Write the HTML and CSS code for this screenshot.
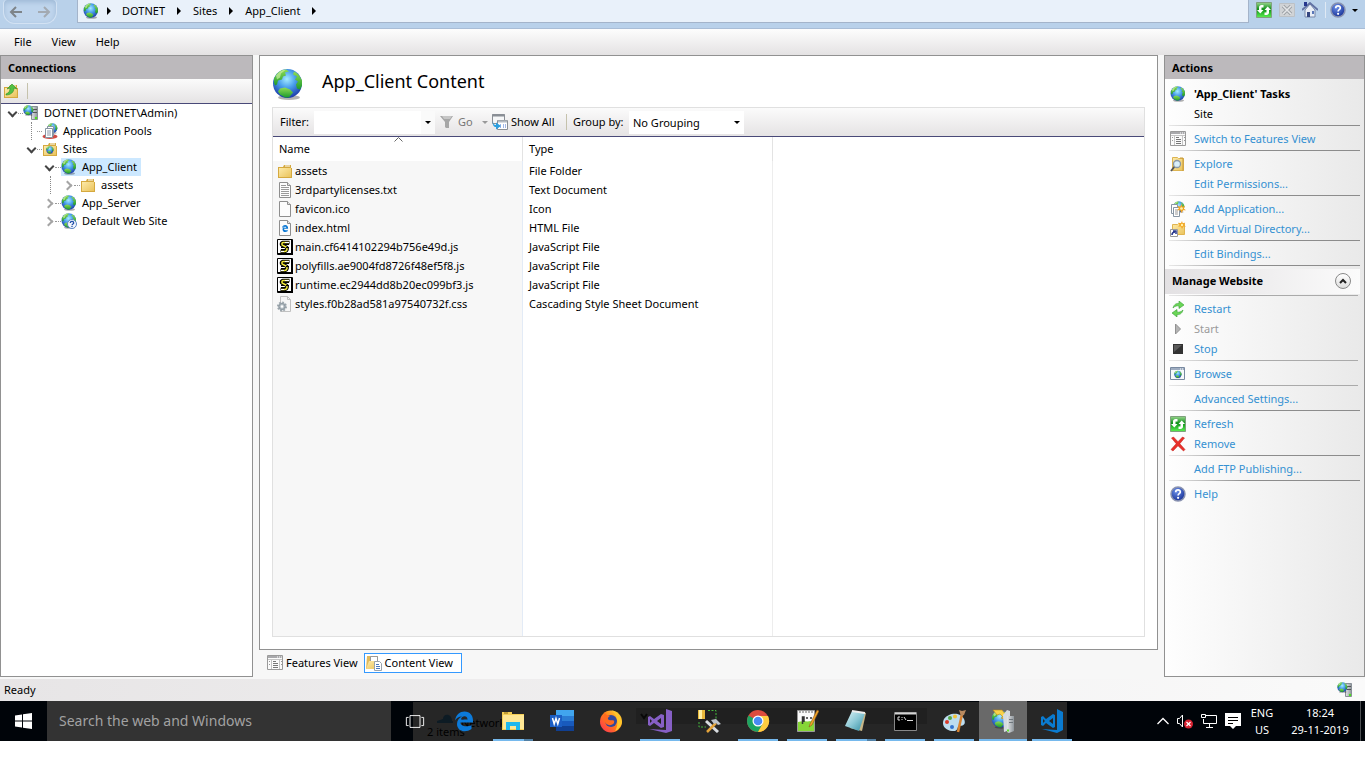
FILE: index.html
```html
<!DOCTYPE html>
<html lang="en">
<head>
<meta charset="utf-8">
<title>App_Client Content</title>
<link rel="stylesheet" href="styles.css">
</head>
<body>
<svg class="sprite" aria-hidden="true">
  <defs>
    <radialGradient id="sea" cx="48%" cy="35%" r="65%"><stop offset="0" stop-color="#a5ecff"/><stop offset=".45" stop-color="#4a9fec"/><stop offset="1" stop-color="#1a3aa8"/></radialGradient>
    <linearGradient id="land" x1="0" y1="0" x2="0" y2="1"><stop offset="0" stop-color="#8fdc55"/><stop offset="1" stop-color="#1c9a2c"/></linearGradient>
    <linearGradient id="paper" x1="0" y1="0" x2="1" y2="1"><stop offset="0" stop-color="#fdeaa8"/><stop offset="1" stop-color="#eac35c"/></linearGradient>
    <linearGradient id="grn" x1="0" y1="0" x2="0" y2="1"><stop offset="0" stop-color="#9ad68e"/><stop offset=".45" stop-color="#0d8f18"/><stop offset="1" stop-color="#5cf052"/></linearGradient>
    <linearGradient id="steel" x1="0" y1="0" x2="1" y2="0"><stop offset="0" stop-color="#e6e8ea"/><stop offset="1" stop-color="#8d949a"/></linearGradient>
    <linearGradient id="fox" x1="0" y1="1" x2="1" y2="0"><stop offset="0" stop-color="#ff2a5a"/><stop offset=".5" stop-color="#ff7a1a"/><stop offset="1" stop-color="#ffe83a"/></linearGradient>
    <linearGradient id="glass" x1="0" y1="0" x2="1" y2="1"><stop offset="0" stop-color="#e0f4f8"/><stop offset=".5" stop-color="#8cc9d6"/><stop offset="1" stop-color="#2f8ba0"/></linearGradient>
    <radialGradient id="blueball" cx="40%" cy="30%" r="70%"><stop offset="0" stop-color="#6d92ea"/><stop offset="1" stop-color="#1a3398"/></radialGradient>
  </defs>
  <symbol id="globe" viewBox="0 0 32 32">
    <ellipse cx="17" cy="29" rx="11" ry="2.500" fill="#000" opacity=".3"/>
    <circle cx="15.500" cy="15" r="14.500" fill="url(#sea)"/>
    <path d="M2 10C5 4 9 1 14 1l3 2-4 1 1 3-3 1-1 3-4 1-1 4-2 1-1-3z" fill="url(#land)"/>
    <path d="M22 3c3 1 6 4 8 9v5l-2 4-3-1-1-4 2-3-3-2 2-3-4-2z" fill="url(#land)"/>
    <path d="M8 20l5-1 5 2 3 3-4 5h-4l-5-3-2-3z" fill="url(#land)"/>
    <path d="M4 7C7 3 11 1 14 1l-5 4-1 4-3 2z" fill="#d8f5b0" opacity=".6"/>
  </symbol>
  <symbol id="folder" viewBox="0 0 16 16">
    <path d="M1 4h5l1-2h7v3h1v10H1z" fill="#d5a93f"/><path d="M8 3h5" stroke="#fff"/><path d="M2 5h12v9H2z" fill="url(#paper)"/>
  </symbol>
  <symbol id="folderup" viewBox="0 0 16 16">
    <use href="#folder"/><path d="M3 11c3-1 4-3 4-6L4 6l5-5 5 5-3-1c0 4-3 7-8 7z" fill="#52c044" stroke="#2b9125" stroke-width=".6"/>
  </symbol>
  <symbol id="server" viewBox="0 0 16 16">
    <path d="M8.500 1.500h6v13h-6z" fill="url(#steel)" stroke="#878f96"/><path d="M10 4.500h4M10 7.500h4" stroke="#555"/><circle cx="13" cy="13" r="1.200" fill="#4ae01a"/>
    <use href="#globe" x="0" y="0" width="11" height="11"/>
  </symbol>
  <symbol id="pools" viewBox="0 0 16 16">
    <use href="#globe" x="5" y="0" width="11" height="11"/>
    <ellipse cx="8" cy="13.500" rx="7.500" ry="2.500" fill="#d14a42"/>
    <path d="M5.500 3.500h6v9h-6z" fill="#fff" stroke="#8795a3"/><path d="M3.500 5.500h7v9h-7z" fill="#fff" stroke="#8795a3"/><path d="M5 8h4M5 10h4M5 12h4" stroke="#8a9aac"/>
  </symbol>
  <symbol id="sites" viewBox="0 0 16 16"><use href="#folder"/><use href="#globe" x="4" y="5" width="8" height="8"/></symbol>
  <symbol id="help" viewBox="0 0 16 16">
    <circle cx="8" cy="8" r="7" fill="url(#blueball)" stroke="#8a93b0" stroke-width="1.500"/>
    <path d="M5.700 6.200C5.800 3.200 10.400 3.300 10.300 6c0 1.600-2.200 1.700-2.200 3.400" fill="none" stroke="#fff" stroke-width="1.700"/><circle cx="8.100" cy="11.800" r="1.100" fill="#fff"/>
  </symbol>
  <symbol id="siteq" viewBox="0 0 16 16"><use href="#globe" width="16" height="16"/><circle cx="11" cy="11" r="4.500" fill="#f2f6fc" stroke="#5a86c8"/><path d="M9.300 10c0-2.200 3.400-2.200 3.400 0 0 1-1.600 1-1.600 2.200M11 13v1" stroke="#1f4faa" stroke-width="1.300" fill="none"/></symbol>
  <symbol id="refresh" viewBox="0 0 16 16">
    <path d="M.5.500h15v15H.5z" fill="url(#grn)" stroke="#7fa17d"/>
    <path d="M7.500 3v2.500H5.500V8h2L4.300 11.500 1 8h2V5.500C3 4 4 3 5.500 3zM8.500 13v-2.500h2V8h-2L11.700 4.500 15 8h-2v2.500c0 1.500-1 2.500-2.500 2.500z" fill="#fff"/>
  </symbol>
  <symbol id="stopx" viewBox="0 0 16 16"><path d="M.5 1.500h15v13H.5z" fill="#d0d3d6" stroke="#bcc1c6"/><path d="M4 4l8 8M12 4l-8 8" stroke="#9ca1a6" stroke-width="3.400"/><path d="M4 4l8 8M12 4l-8 8" stroke="#e4e6e8" stroke-width="1.600"/></symbol>
  <symbol id="home" viewBox="0 0 16 16">
    <path d="M3 8l5-6 5 6v7H3z" fill="#e9eef6" stroke="#7989a8"/><path d="M0 8l8-7 8 7" fill="none" stroke="#6272a4" stroke-width="1.800"/><path d="M2 0h3v4H2z" fill="#26378e"/><path d="M5 10h3v5H5z" fill="#354780"/><path d="M10 9h2v3h-2z" fill="#5a77b8"/>
  </symbol>
  <symbol id="funnel" viewBox="0 0 16 16"><path d="M1 2h13l-4 6v6H7l-1-1V8z" fill="#a6a6a6"/><path d="M3 2h10l-2 3H5z" fill="#c6c6c6"/></symbol>
  <symbol id="showall" viewBox="0 0 16 16"><path d="M.5.500h12v9H.500z" fill="#f6f7f8" stroke="#8a8f96"/><path d="M0 1.500h13" stroke="#8a8f96" stroke-width="2"/><path d="M5.500 6.500h10v9h-10z" fill="#fff" stroke="#8a8f96"/><path d="M6 7.500h9" stroke="#b4bac2" stroke-width="2"/><path d="M8 11h1m2 0h1m1 0h1M8 13h1m2 0h1m1 0h1" stroke="#456ed0"/><path d="M1 7c0 3 1 4 3 4V8.500l5 3.500-5 3.500V13C2 13 0 11 1 7z" fill="#2b9fe0"/></symbol>
  <symbol id="doc" viewBox="0 0 16 16"><path d="M2.500.500h8l3 3v12h-11z" fill="#fcfcfc" stroke="#8e8e8e"/><path d="M10.500.500v3h3" fill="#e5e5e5" stroke="#8e8e8e"/></symbol>
  <symbol id="text" viewBox="0 0 16 16"><use href="#doc"/><path d="M4 3.500h5M4 5.500h8M4 7.500h8M4 9.500h8M4 11.500h8M4 13.500h8" stroke="#999"/></symbol>
  <symbol id="edgeglyph" viewBox="0 0 20 20"><path d="M1 9C2 3 6 0 10.500 0 16 0 19 4 19 9v2H6.500c.2 4 6.500 5 11 2.400v4.200C11 22 3 19.500 3 12.500 3 9 5 6.500 8 5 4.500 5 2.200 7 1 9zm6-1h6.500c0-4.500-6-4-6.500 0z"/></symbol>
  <symbol id="html" viewBox="0 0 16 16"><use href="#doc"/><use href="#edgeglyph" x="4.500" y="5" width="7" height="7" fill="#0b78d4"/></symbol>
  <symbol id="js" viewBox="0 0 16 16"><path d="M.5.500h15v15H.5z" fill="#fff" stroke="#000"/><path d="M15 1v14H1" fill="none" stroke="#000" stroke-width="2"/><path d="M12.500 3.500H6C4 4 4 6 6 6.500l3 1.500c2 1 1 4-1 4.500H3.500" fill="none" stroke="#000" stroke-width="3.600"/><path d="M12 3.500H6C4.500 4 4.500 6 6 6.500l3 1.500c2 1 1 4-1 4.500H4" fill="none" stroke="#f2ea3a" stroke-width="1.500"/><path d="M8 3.500h4M4 12.500h3" stroke="#fff"/><path d="M8 5.500h4M4 8.500h3M9 8.500h3M4 10.500h4" stroke="#000"/></symbol>
  <symbol id="css" viewBox="0 0 16 16"><path d="M3.500.500h7l3 3v12h-10z" fill="#f6f6f6" stroke="#c1c1c1"/><path d="M10.500.500v3h3" fill="none" stroke="#c1c1c1"/><circle cx="5" cy="10.500" r="4" fill="#c3cbd0" stroke="#9aa4ab" stroke-width="2" stroke-dasharray="1.700 1.400"/><circle cx="5" cy="10.500" r="3" fill="#b6bfc5" stroke="#8b969e"/><circle cx="5" cy="10.500" r="1.200" fill="#fff"/></symbol>
  <symbol id="features" viewBox="0 0 16 16"><path d="M.5.500h15v14H.5z" fill="#fbfbfb" stroke="#9a9a9a"/><path d="M1 2h14" stroke="#a9a9ac" stroke-width="2"/><path d="M10 2h1m1 0h1m1 0h1" stroke="#fff"/><path d="M1 4.500h14M4.500 4v10M12.500 4v10" stroke="#c4c4c4"/><path d="M6 6.500h3M6 8.500h5M6 10.500h5M6 12.500h5" stroke="#777"/><path d="M2 6.500h1M2 9.500h1M14 6.500h1M14 9.500h1" stroke="#999"/></symbol>
  <symbol id="content" viewBox="0 0 16 16"><path d="M1 1h11v13H0z" fill="#e1ba5c"/><path d="M4.500 1.500h7v8h-7z" fill="#fff" stroke="#999"/><path d="M3 6h10l-3 8H0z" fill="url(#paper)"/><path d="M8.500 6.500h5l2 2v7h-7z" fill="#fff" stroke="#9aa3ab"/><path d="M10 9.500h3M10 11.500h4M10 13.500h4" stroke="#4a78bd"/></symbol>
  <symbol id="explore" viewBox="0 0 16 16"><path d="M2.500 1.500h5l1 1h5v12h-11z" fill="url(#paper)" stroke="#dcb452"/><path d="M10 2h3v13" stroke="#c99a38" fill="none"/><path d="M5 10l-4 5" stroke="#555" stroke-width="2"/><circle cx="7" cy="8" r="3.500" fill="#d9effa" stroke="#8a98a6" stroke-width="1.300"/></symbol>
  <symbol id="star" viewBox="0 0 10 10"><path d="M5 0l1 3 3-1-1.500 3L10 7 6.700 7 5 10 3.700 7 0 7l2-2L.5 2l3 1z" fill="#f5a623"/><circle cx="5" cy="5" r="1.500" fill="#fff2a8"/></symbol>
  <symbol id="addapp" viewBox="0 0 16 16"><use href="#globe" x="3" y="0" width="12" height="12"/><path d="M1.500 3.500h6v9h-6z" fill="#fff" stroke="#8795a3"/><path d="M3.500 6.500h6v9h-6z" fill="#fff" stroke="#8795a3"/><path d="M5 9h3M5 11h3M5 13h3" stroke="#999"/><use href="#star" x="7" y="3" width="9" height="9"/></symbol>
  <symbol id="adddir" viewBox="0 0 16 16"><path d="M2.500 3.500h5l1-1h6v11h-12z" fill="url(#paper)" stroke="#e0b450"/><path d="M.5 8.500h7v7h-7z" fill="#fff" stroke="#999"/><path d="M2 14c0-2 1-3 3-3M3 10h3v3" stroke="#27378d" stroke-width="1.500" fill="none"/><use href="#star" x="8" y="0" width="8" height="8"/></symbol>
  <symbol id="restart" viewBox="0 0 16 16"><path d="M3 7c1-4 4-5 6-4.500V0l5 4-5 3.500V5C7 4.500 5 5 3 7zM13 9c-1 4-4 5-6 4.500V16l-5-4 5-3.500V11c2 .5 4 0 6-2z" fill="#6ad656" stroke="#36a032" stroke-width=".6"/></symbol>
  <symbol id="start" viewBox="0 0 16 16"><path d="M5.500 3l5 5-5 5z" fill="#b4b4b4" stroke="#919191"/></symbol>
  <symbol id="stop" viewBox="0 0 16 16"><path d="M3 3h10v10H3z" fill="#333"/><path d="M4 4h8l-8 7z" fill="#5a5a5a"/></symbol>
  <symbol id="browse" viewBox="0 0 16 16"><path d="M.5 1.500h14v12H.500z" fill="#f7f9fb" stroke="#7889a0"/><path d="M1 3h13" stroke="#9eacc0" stroke-width="2"/><path d="M10 3h1m1 0h1" stroke="#fff"/><use href="#globe" x="4" y="4.500" width="8" height="8"/></symbol>
  <symbol id="remove" viewBox="0 0 16 16"><path d="M1.500 2l2-1L8 5.700 12.500 1l2 1-4.700 5.700L15 13.500 13.500 15 8 9.800 3 15l-2-1.500 5.200-5.800z" fill="#e8302a" stroke="#c01812" stroke-width=".5"/></symbol>
  <symbol id="taskview" viewBox="0 0 22 16"><path d="M5.500 1.500h11v13h-11zM4 3.500H1.500v9H4M18 3.500h2.500v9H18" fill="none" stroke="#fff"/></symbol>
  <symbol id="explorer" viewBox="0 0 24 24"><path d="M1 3h10v2h12v16H1z" fill="#f5ce55"/><path d="M2 6h21v14H2z" fill="#ffe794"/><path d="M3 4h4" stroke="#8b6c16"/><path d="M5 13h14v8h-4v-4H9v4H5z" fill="#21b8ec"/></symbol>
  <symbol id="word" viewBox="0 0 24 24"><path d="M6 1h18v6H6z" fill="#41a5ee"/><path d="M6 7h18v5H6z" fill="#2b7cd3"/><path d="M6 12h18v5H6z" fill="#185abd"/><path d="M6 17h18v5H6z" fill="#103f91"/><path d="M0 6h12v12H0z" fill="#1b5ec4"/><path d="M2.500 9l1.700 6L6 9.500 7.800 15l1.700-6" fill="none" stroke="#fff" stroke-width="1.500"/></symbol>
  <symbol id="firefox" viewBox="0 0 24 24"><circle cx="12" cy="12.500" r="11" fill="url(#fox)"/><circle cx="12" cy="12" r="6" fill="#31489c"/><path d="M6 3c0 3 2 3 5 4-2 1-3 3-1 4 3 1 6-1 5 3-3 4-9 2-10-3-1-3 0-6 1-8z" fill="#ff6a20"/><path d="M13 1c6 3 9 7 10 12-1 5-4 8-7 9 4-6 3-15-3-21z" fill="#ffc72c"/></symbol>
  <symbol id="vs" viewBox="0 0 24 24"><path d="M18 0l6 2v20l-6 2-17-4 17 1zM2 7l4 3 7-5 3 1v12l-3 1-7-5-4 3-2-1V8zm0 3v4l2-2zm11-1l-4 3 4 3z" fill="#865fc5" fill-rule="evenodd"/></symbol>
  <symbol id="tools" viewBox="0 0 24 24"><path d="M1 1h7v9H1z" fill="#e9b93b"/><path d="M2 1h3v9H2z" fill="#fff0a5"/><path d="M11 1.500h8v9M2 13v5h7" stroke="#45b83c" fill="none" stroke-dasharray="2 1.500"/><path d="M9 12l12 11" stroke="#d8dce0" stroke-width="3"/><path d="M19 14l-9 9" stroke="#e4a43b" stroke-width="2.500"/><path d="M14 11l5-1 5 5-3 1-2-2-2 1z" fill="#bcc2c8"/></symbol>
  <symbol id="chrome" viewBox="0 0 24 24"><circle cx="12" cy="12" r="11" fill="#dd4b3e"/><path d="M12 12L2.500 6.500A11 11 0 0 0 12 23l5-8z" fill="#1da462"/><path d="M12 7h10a11 11 0 0 1-10 16l5-9z" fill="#ffcd40"/><circle cx="12" cy="12" r="5.500" fill="#fff"/><circle cx="12" cy="12" r="4.300" fill="#4a8af4"/></symbol>
  <symbol id="npp" viewBox="0 0 24 24"><path d="M2.500 1.500h17v21h-17z" fill="#fafafa" stroke="#999"/><path d="M3 13c6-2 10 1 16-2v11H3z" fill="#86d637"/><path d="M4 3h14" stroke="#666" stroke-dasharray="2 1"/><path d="M7.500 15V8H9v5M11 9h2M15 9h2" stroke="#333" stroke-width="1.500" fill="none"/><path d="M22 1l-7 14-1 3 3-2 7-14z" fill="#f0a32a" stroke="#7a4a18" stroke-width=".5"/></symbol>
  <symbol id="notepad" viewBox="0 0 24 24"><path d="M9 2l13 2-4 18-12-3z" fill="#c8b788"/><path d="M8 2l13 2-6 18-14-5z" fill="url(#glass)"/><path d="M8 2l13 2" stroke="#eee" stroke-width="2"/></symbol>
  <symbol id="cmd" viewBox="0 0 24 24"><path d="M1.500 3.500h22v18h-22z" fill="#000" stroke="#888"/><path d="M2 4.500h21" stroke="#d5d5d5" stroke-width="2"/><path d="M7 8H5v3h2M9 8v1m0 1v1M11 8l2 3M14 11.500h6" stroke="#ddd" fill="none"/></symbol>
  <symbol id="paint" viewBox="0 0 24 24"><path d="M2 10c4-6 16-8 20 0 3 7-3 7-5 7s0 6-7 5C3 21-1 16 2 10z" fill="#bdddf0"/><circle cx="5" cy="13" r="2" fill="#d93a2b"/><circle cx="8" cy="9" r="2" fill="#55a845"/><circle cx="13" cy="7.500" r="2" fill="#f5c338"/><circle cx="10" cy="18" r="2" fill="#3474cf"/><path d="M20 5l-4 18" stroke="#d98432" stroke-width="2.500"/><path d="M17 1l3 1 4-1-2 5-3 1z" fill="#b98a60"/></symbol>
  <symbol id="iis" viewBox="0 0 24 24"><use href="#globe" x="0" y="1" width="19" height="19"/><path d="M2 1h9l4 5 2-1-1 6-6-2 2-1-3-3-3 1z" fill="#f9d24a" stroke="#be8a14" stroke-width=".6"/><path d="M12 6l4-5 3 1v19l-6 2z" fill="#d5dbe0"/><path d="M16 7h7v15l-5 2-2-1z" fill="url(#steel)"/><path d="M18 10.500h4M18 13.500h4" stroke="#6d757b"/><path d="M16 21.500h2" stroke="#5be02a" stroke-width="2"/></symbol>
  <symbol id="vscode" viewBox="0 0 24 24"><path d="M17 0l6 3v18l-6 3-15-4 15 1zM13 5l2 1v12l-2 1-7-5-3 3-2-1V8l2-1 3 3zm0 4l-4 3 4 3zM3 10v4l2-2z" fill="#0a7bd0" fill-rule="evenodd"/></symbol>
</svg>

<div class="app">
  <header class="address">
    <nav class="history" aria-label="History">
      <button class="plain" aria-label="Back"><svg width="14" height="12" viewBox="0 0 14 12"><path d="M13 6H2M7 1L2 6l5 5" class="arrow"/></svg></button>
      <button class="plain" aria-label="Forward"><svg width="14" height="12" viewBox="0 0 14 12"><path d="M1 6h11M7 1l5 5-5 5" class="arrow pale"/></svg></button>
    </nav>
    <nav class="crumbs" aria-label="Path">
      <svg class="i16"><use href="#globe"/></svg><i class="tri"></i>
      <a href="#dotnet">DOTNET</a><i class="tri"></i>
      <a href="#sites">Sites</a><i class="tri"></i>
      <a href="#client">App_Client</a><i class="tri"></i>
    </nav>
    <div class="quick">
      <button class="plain" aria-label="Refresh"><svg class="i16"><use href="#refresh"/></svg></button>
      <button class="plain" aria-label="Stop"><svg class="i16"><use href="#stopx"/></svg></button>
      <button class="plain" aria-label="Home"><svg class="i16"><use href="#home"/></svg></button>
      <i class="quick-sep"></i>
      <button class="plain help-btn" aria-label="Help"><svg class="i16"><use href="#help"/></svg><i class="down"></i></button>
    </div>
  </header>
  <nav class="menu" aria-label="Menu"><button class="plain">File</button><button class="plain">View</button><button class="plain">Help</button></nav>

  <div class="panes">
    <aside class="panel connections">
      <h2 class="caption">Connections</h2>
      <div class="tree-bar"><button class="plain" aria-label="Up"><svg class="i16"><use href="#folderup"/></svg></button><i class="bar-sep"></i></div>
      <ul class="tree">
        <li class="l0"><i class="exp open"></i><i class="dots"></i><svg class="i16"><use href="#server"/></svg><span>DOTNET (DOTNET\Admin)</span></li>
        <li class="l1 guide"><i class="exp"></i><i class="dots"></i><svg class="i16"><use href="#pools"/></svg><span>Application Pools</span></li>
        <li class="l1"><i class="exp open"></i><i class="dots"></i><svg class="i16"><use href="#sites"/></svg><span>Sites</span></li>
        <li class="l2"><i class="exp open"></i><i class="dots"></i><span class="selected"><svg class="i16"><use href="#globe"/></svg><span>App_Client</span></span></li>
        <li class="l3 guide"><i class="exp closed"></i><i class="dots"></i><svg class="i16"><use href="#folder"/></svg><span>assets</span></li>
        <li class="l2"><i class="exp closed"></i><i class="dots"></i><svg class="i16"><use href="#globe"/></svg><span>App_Server</span></li>
        <li class="l2"><i class="exp closed"></i><i class="dots"></i><svg class="i16"><use href="#siteq"/></svg><span>Default Web Site</span></li>
      </ul>
    </aside>

    <div class="center">
      <main class="panel content">
        <div class="title"><svg class="i32"><use href="#globe"/></svg><h1>App_Client Content</h1></div>
        <div class="list">
          <div class="filter">
            <label for="filter">Filter:</label>
            <div class="combo"><input id="filter" type="text"><button class="plain" aria-label="Filter history"><i class="down"></i></button></div>
            <button class="plain go" disabled><svg class="i16"><use href="#funnel"/></svg>Go<i class="down"></i></button>
            <button class="plain showall"><svg class="i16"><use href="#showall"/></svg>Show All</button>
            <i class="bar-sep"></i>
            <label for="group">Group by:</label>
            <div class="picker"><select id="group"><option>No Grouping</option></select><i class="down"></i></div>
          </div>
          <div class="table-area">
            <table>
              <colgroup><col class="c1"><col class="c1"><col></colgroup>
              <thead><tr><th class="sorted">Name<svg class="sort" width="9" height="5" viewBox="0 0 9 5"><path d="M.5 4.500l4-4 4 4" fill="none" stroke="#666"/></svg></th><th>Type</th><th></th></tr></thead>
              <tbody>
                <tr><td><div class="file"><svg class="i16"><use href="#folder"/></svg>assets</div></td><td>File Folder</td><td></td></tr>
                <tr><td><div class="file"><svg class="i16"><use href="#text"/></svg>3rdpartylicenses.txt</div></td><td>Text Document</td><td></td></tr>
                <tr><td><div class="file"><svg class="i16"><use href="#doc"/></svg>favicon.ico</div></td><td>Icon</td><td></td></tr>
                <tr><td><div class="file"><svg class="i16"><use href="#html"/></svg>index.html</div></td><td>HTML File</td><td></td></tr>
                <tr><td><div class="file"><svg class="i16"><use href="#js"/></svg>main.cf6414102294b756e49d.js</div></td><td>JavaScript File</td><td></td></tr>
                <tr><td><div class="file"><svg class="i16"><use href="#js"/></svg>polyfills.ae9004fd8726f48ef5f8.js</div></td><td>JavaScript File</td><td></td></tr>
                <tr><td><div class="file"><svg class="i16"><use href="#js"/></svg>runtime.ec2944dd8b20ec099bf3.js</div></td><td>JavaScript File</td><td></td></tr>
                <tr><td><div class="file"><svg class="i16"><use href="#css"/></svg>styles.f0b28ad581a97540732f.css</div></td><td>Cascading Style Sheet Document</td><td></td></tr>
              </tbody>
            </table>
          </div>
        </div>
      </main>
      <div class="views">
        <button class="plain view"><svg class="i16"><use href="#features"/></svg>Features View</button>
        <button class="plain view active"><svg class="i16"><use href="#content"/></svg>Content View</button>
      </div>
    </div>

    <aside class="panel actions">
      <h2 class="caption">Actions</h2>
      <div class="act head"><svg class="i16"><use href="#globe"/></svg><b>'App_Client' Tasks</b></div>
      <div class="act noicon"><span>Site</span></div>
      <hr>
      <div class="act"><svg class="i16"><use href="#features"/></svg><a href="#features-view">Switch to Features View</a></div>
      <hr>
      <div class="act"><svg class="i16"><use href="#explore"/></svg><a href="#explore-site">Explore</a></div>
      <div class="act noicon"><a href="#permissions">Edit Permissions...</a></div>
      <hr>
      <div class="act"><svg class="i16"><use href="#addapp"/></svg><a href="#add-application">Add Application...</a></div>
      <div class="act"><svg class="i16"><use href="#adddir"/></svg><a href="#add-directory">Add Virtual Directory...</a></div>
      <hr>
      <div class="act noicon"><a href="#bindings">Edit Bindings...</a></div>
      <hr>
      <div class="group"><h3>Manage Website</h3><button class="fold" aria-label="Collapse"><svg width="8" height="6" viewBox="0 0 8 6"><path d="M1 5l3-3 3 3" fill="none" stroke="#222" stroke-width="2"/></svg></button></div>
      <hr class="sub">
      <div class="act"><svg class="i16"><use href="#restart"/></svg><a href="#restart-site">Restart</a></div>
      <div class="act"><svg class="i16"><use href="#start"/></svg><span class="off">Start</span></div>
      <div class="act"><svg class="i16"><use href="#stop"/></svg><a href="#stop-site">Stop</a></div>
      <hr class="sub">
      <div class="act"><svg class="i16"><use href="#browse"/></svg><a href="#browse-site">Browse</a></div>
      <hr class="sub">
      <div class="act noicon"><a href="#advanced">Advanced Settings...</a></div>
      <hr>
      <div class="act"><svg class="i16"><use href="#refresh"/></svg><a href="#refresh-site">Refresh</a></div>
      <div class="act"><svg class="i16"><use href="#remove"/></svg><a href="#remove-site">Remove</a></div>
      <hr>
      <div class="act noicon"><a href="#ftp">Add FTP Publishing...</a></div>
      <hr>
      <div class="act"><svg class="i16"><use href="#help"/></svg><a href="#help-topics">Help</a></div>
    </aside>
  </div>

  <footer class="status"><span>Ready</span><svg class="i16"><use href="#server"/></svg></footer>

  <div class="taskbar">
    <button class="start" aria-label="Start"><svg width="17" height="16" viewBox="0 0 17 16"><path d="M0 2.500L7 1.500v6H0zM8 1.300L17 0v7.500H8zM0 8.500h7v6L0 13.500zM8 8.500h9V16l-9-1.300z" fill="#fff"/></svg></button>
    <input class="search" type="text" placeholder="Search the web and Windows" aria-label="Search the web and Windows">
    <div class="behind">
      <span class="ghost network">Network</span><span class="ghost items">2 items</span>
      <svg class="ghost cloud" width="16" height="10" viewBox="0 0 16 10"><path d="M0 9h16V7h-1c0-8-9-8-9-2L0 7z" fill="#0d1b24"/></svg>
      <i class="ghost strip"></i>
      <svg class="ghost chevron" width="9" height="7" viewBox="0 0 9 7"><path d="M1 1l3 4 3-4" fill="none" stroke="#080808" stroke-width="2"/></svg>
    </div>
    <div class="apps">
      <button aria-label="Task View"><svg class="tv"><use href="#taskview"/></svg></button>
      <button aria-label="Edge"><svg class="tv"><use href="#edgeglyph" fill="#0c7ad9"/></svg></button>
      <button class="run multi" aria-label="File Explorer"><svg class="i24"><use href="#explorer"/></svg></button>
      <button aria-label="Word"><svg class="i24"><use href="#word"/></svg></button>
      <button aria-label="Firefox"><svg class="i24"><use href="#firefox"/></svg></button>
      <button class="run" aria-label="Visual Studio"><svg class="i24"><use href="#vs"/></svg></button>
      <button aria-label="SQL Tools"><svg class="i24"><use href="#tools"/></svg></button>
      <button class="run" aria-label="Chrome"><svg class="i24"><use href="#chrome"/></svg></button>
      <button class="run" aria-label="Notepad++"><svg class="i24"><use href="#npp"/></svg></button>
      <button class="run multi" aria-label="Notepad"><svg class="i24"><use href="#notepad"/></svg></button>
      <button class="run" aria-label="Command Prompt"><svg class="i24"><use href="#cmd"/></svg></button>
      <button class="run" aria-label="Paint"><svg class="i24"><use href="#paint"/></svg></button>
      <button class="run current" aria-label="IIS Manager"><svg class="i24"><use href="#iis"/></svg></button>
      <button class="run" aria-label="VS Code"><svg class="i24"><use href="#vscode"/></svg></button>
    </div>
    <div class="tray">
      <svg width="12" height="8" viewBox="0 0 12 8"><path d="M.5 7L6 1.500 11.500 7" fill="none" stroke="#fff" stroke-width="1.300"/></svg>
      <svg width="16" height="16" viewBox="0 0 16 16"><path d="M.5 5.500h2l3-3.500v12l-3-3.500h-2z" fill="none" stroke="#fff"/><circle cx="11.500" cy="11" r="4.500" fill="#d92332"/><path d="M9.500 9l4 4m0-4l-4 4" stroke="#fff" stroke-width="1.200"/></svg>
      <svg width="16" height="16" viewBox="0 0 16 16"><path d="M5 2.500h10.500v8H2.500V6M8.500 11v3M5 14.500h7M.5 1.500h4v3h-4z" fill="none" stroke="#fff"/></svg>
      <svg width="16" height="16" viewBox="0 0 16 16"><path d="M0 0h16v13h-5l-3 3-3-3H0z" fill="#fff"/><path d="M3 4.500h10M3 7.500h10M3 10.500h5" stroke="#000"/></svg>
      <div class="lang">ENG<br>US</div>
      <time class="clock">18:24<br>29-11-2019</time>
      <i class="desktop"></i>
    </div>
  </div>
</div>
</body>
</html>
```
FILE: styles.css
```css
*, *::before, *::after { box-sizing: border-box; }
html, body { height: 100%; margin: 0; }
body { background: #fff; color: #000; font: 11px/18px "Noto Sans", "Open Sans", sans-serif; }
h1, h2, h3, ul { margin: 0; padding: 0; font-size: inherit; }
a { color: inherit; text-decoration: none; }
i { font-style: normal; flex: none; }
svg { flex: none; display: block; }
button, input, select { font: inherit; color: inherit; border: 0; padding: 0; margin: 0; }
.sprite { position: absolute; width: 0; height: 0; }
.i16 { width: 16px; height: 16px; }
.i24 { width: 24px; height: 24px; }
.i32 { width: 32px; height: 33px; }
.plain { background: none; display: flex; align-items: center; }
.down { border: 3px solid transparent; border-top-color: #000; border-bottom: 0; }

.app { min-height: 100vh; padding: 0 1px 27px 0; display: flex; flex-direction: column; }

.address { height: 29px; display: flex; align-items: flex-start; background: #b9d1ea; border-bottom: 1px solid #a9bdd6; }
.history { width: 54px; height: 24px; margin: 0 20px 0 3px; padding: 0 5px; display: flex; justify-content: space-between; background: #bfd5ed; border: 1px solid #d3e2f3; border-top: 0; border-radius: 4px 4px 12px 12px; box-shadow: inset 0 2px 5px #9db8d5; }
.arrow { fill: none; stroke: #7e8489; stroke-width: 2; }
.pale { stroke: #a3aab2; }
.crumbs { flex: 1; height: 23px; padding: 0 5px; display: flex; align-items: center; gap: 12px; background: #e9f1fa; border: 1px solid #a4b4ca; border-top: 0; }
.crumbs .i16, .crumbs .i16 + .tri { margin-right: -4px; }
.crumbs .i16 + .tri { margin-right: -1px; }
.tri { border: 4px solid transparent; border-left-color: #000; border-right: 0; }
.quick { height: 20px; width: 116px; padding-left: 7px; display: flex; align-items: center; gap: 7px; }
.quick-sep { width: 1px; height: 16px; background: #dfe9f4; margin: 0 -3px 0 0; }
.help-btn { gap: 6px; }
.menu { height: 26px; padding-left: 14px; display: flex; gap: 20px; background: linear-gradient(#fdfdfd, #e4e2e3); }

.panes { flex: 1; display: flex; gap: 6px; background: #f7f7f7; padding: 0 0 1px; }
.panel { border: 1px solid #919191; background: #fff; }
.caption { height: 23px; padding-left: 7px; line-height: 24px; font-weight: 700; background: #bcb9bc; }
.connections { width: 253px; margin-bottom: 1px; }
.tree-bar { height: 25px; display: flex; align-items: center; padding-left: 2px; gap: 8px; background: linear-gradient(#fbfbfb, #e5e3e4); border-bottom: 1px solid #494978; }
.bar-sep { width: 1px; height: 16px; background: #c5c2ac; }
.tree { list-style: none; }
.tree li { height: 18px; display: flex; align-items: center; padding-left: 5px; position: relative; white-space: nowrap; }
.tree .l1 { padding-left: 24px; }
.tree .l2 { padding-left: 42px; }
.tree .l3 { padding-left: 61px; }
.tree .i16 + span { margin-left: 5px; }
.exp { width: 12px; height: 12px; display: grid; place-items: center; }
.open::before, .closed::before { content: ""; width: 7px; height: 7px; border: solid #444; border-width: 0 2px 2px 0; transform: translateY(-1px) rotate(45deg); }
.closed::before { border-color: #a5a5a5; transform: translateX(-1px) rotate(-45deg); }
.dots { width: 5px; border-top: 1px dotted #999; }
.l2 .dots, .l3 .dots { width: 6px; }
.guide::before { content: ""; position: absolute; top: 0; height: 18px; border-left: 1px dotted #888; }
.guide.l1::before { left: 30px; }
.guide.l3::before { left: 49px; }
.selected { display: flex; align-items: center; height: 18px; padding-right: 4px; background: #cce8ff; }

.center { flex: 1; min-width: 0; display: flex; flex-direction: column; }
.content { flex: 1; padding: 12px; display: flex; flex-direction: column; }
.title { height: 39px; display: flex; gap: 18px; }
.title h1 { font-size: 18px; line-height: 26px; font-weight: 400; }
.list { flex: 1; display: flex; flex-direction: column; border: 1px solid #e0e0e0; }
.filter { height: 29px; padding-left: 7px; display: flex; align-items: center; background: linear-gradient(#fbfbfb, #e5e3e4); border-bottom: 1px solid #494978; white-space: nowrap; }
.filter label { width: 34px; }
.combo { width: 121px; height: 23px; display: flex; background: #fff; }
.combo input { flex: 1; min-width: 0; background: none; padding: 0 4px; }
.combo button { width: 14px; justify-content: center; background: #fafafa; }
.go { width: 53px; margin-left: 4px; gap: 3px; color: #777; }
.go .down { margin-left: auto; margin-right: 4px; border-top-color: #999; }
.showall { width: 74px; gap: 3px; }
.filter .bar-sep { margin-right: 6px; }
.filter .bar-sep + label { width: 56px; }
.picker { width: 115px; height: 23px; position: relative; background: #fff; }
.picker select { width: 100%; height: 23px; padding: 1px 4px 0; appearance: none; background: none; }
.picker .down { position: absolute; right: 4px; top: 10px; }
.table-area { flex: 1; background: linear-gradient(to right, #f7f7f7 249px, #e3ebf6 249px 250px, #fff 250px 499px, #ededed 499px 500px, #fff 500px); }
table { width: 100%; border-collapse: separate; border-spacing: 0; table-layout: fixed; }
.c1 { width: 250px; }
th { height: 24px; padding: 0 6px; text-align: left; font-weight: 400; background: #fff; border-right: 1px solid #e3e3e3; }
th:last-child { border-right: 0; }
.sorted { position: relative; }
.sort { position: absolute; top: 0; left: 50%; margin-left: -4px; }
td { height: 19px; padding: 0 6px; white-space: nowrap; }
td:first-child { padding-left: 4px; }
.file { display: flex; align-items: center; gap: 2px; }

.views { height: 28px; padding: 3px 0 5px 6px; display: flex; gap: 4px; }
.view { height: 20px; padding: 0 1px; border: 1px solid transparent; gap: 3px; }
.view.active { padding-right: 8px; border-color: #3399ff; background: #fff; }

.actions { width: 201px; margin-bottom: 1px; background: linear-gradient(to right, #fefefe, #e9e9e9); }
.actions .caption + .act { margin-top: 5px; }
.act { height: 20px; padding-left: 5px; display: flex; align-items: center; gap: 8px; color: #000; white-space: nowrap; }
.act a { color: #3591d2; }
.noicon { padding-left: 29px; }
.off { color: #9a9a9a; }
hr { height: 1px; margin: 1px 4px 3px; border: 0; background: linear-gradient(to right, #e8e8e8, #8c8c8c 40%); }
hr.sub { margin-right: 6px; background: linear-gradient(to right, #e8e8e8, #aaa 40%); }
.group { height: 25px; margin-right: 4px; padding: 0 9px 2px 7px; display: flex; align-items: center; justify-content: space-between; background: linear-gradient(to right, #e3e1e3, #fbfbfb); }
.fold { width: 16px; height: 16px; border: 1px solid #888; border-radius: 50%; background: linear-gradient(#fff, #ddd); display: grid; place-items: center; }

.status { height: 22px; padding: 0 12px 0 4px; display: flex; align-items: center; justify-content: space-between; background: linear-gradient(to right, #e7e5e6, #fafafa); }

.taskbar { height: 40px; display: flex; position: relative; background: #000409; color: #fff; }
.taskbar button { flex: none; background: none; display: grid; place-items: center; }
.taskbar .start { width: 47px; }
.search { width: 344px; padding: 0 12px; background: #333; font-size: 14px; }
.search::placeholder { color: #a2a2a2; opacity: 1; }
.behind { position: absolute; left: 413px; width: 654px; top: 1px; bottom: 0; background: #262626; color: #000; }
.ghost { position: absolute; }
.network { left: 48px; top: 12px; }
.items { left: 14px; top: 21px; }
.cloud { left: 24px; top: 12px; }
.strip { left: 223px; right: 140px; top: 6px; height: 16px; background: #202020; }
.chevron { left: 227px; top: 11px; }
.apps { position: relative; display: flex; gap: 1px; }
.apps button { width: 48px; height: 40px; position: relative; }
.tv { width: 20px; height: 21px; }
.run::after { content: ""; position: absolute; left: 4px; right: 4px; bottom: 0; height: 2px; background: #76b9ed; }
.multi::after { background: linear-gradient(to right, #76b9ed 31px, #5280a5 31px); }
.taskbar .current { background: #696969; }
.run.current::after { left: 0; right: 0; }
.tray { margin-left: auto; display: flex; align-items: center; gap: 8px; line-height: 17px; text-align: center; white-space: nowrap; }
.lang { width: 24px; margin-left: 1px; }
.clock { width: 60px; margin-left: 8px; }
.desktop { width: 1px; height: 40px; margin: 0 4px 0 2px; background: #4c4f52; }
```
